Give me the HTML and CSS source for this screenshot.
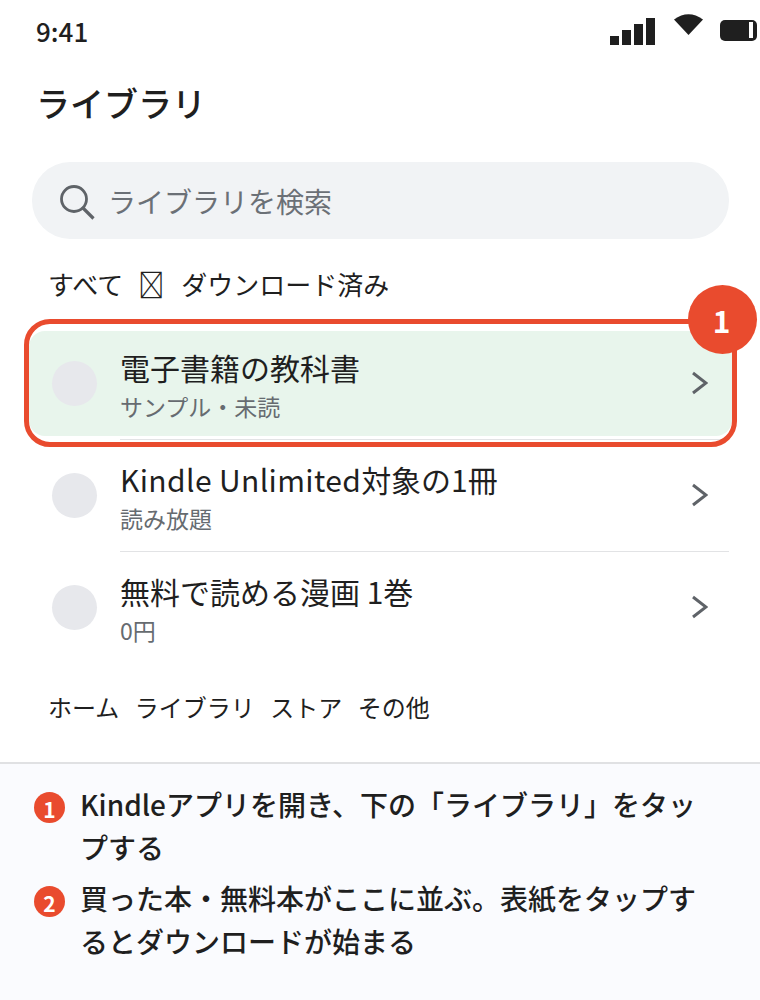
FILE: index.html
```html
<!DOCTYPE html>
<html lang="ja">
<head>
<meta charset="utf-8">
<title>ライブラリ</title>
<link rel="stylesheet" href="styles.css">
</head>
<body>
<div class="phone">
  <div class="status">
    <span class="time">9:41</span>
    <svg class="status-icons" width="147" height="31" viewBox="0 0 147 31">
      <rect x="0" y="22" width="9" height="9" fill="#1f1f1f"/>
      <rect x="12" y="16" width="9" height="15" fill="#1f1f1f"/>
      <rect x="24" y="10" width="9" height="21" fill="#1f1f1f"/>
      <rect x="36" y="4" width="9" height="27" fill="#1f1f1f"/>
      <path d="M64 5.5Q78.5 -5 93 5.5L78.5 21Z" fill="#1f1f1f"/>
      <rect x="110" y="6" width="37" height="21" rx="5" fill="#1f1f1f"/>
      <rect x="139" y="8" width="4" height="16" fill="#fff"/>
    </svg>
  </div>
  <h1 class="title">ライブラリ</h1>
  <div class="search">
    <svg class="search-icon" width="37" height="37" viewBox="0 0 37 37">
      <circle cx="15" cy="15" r="12.5" fill="none" stroke="#5f6368" stroke-width="2.8"/>
      <path d="M24 24L34.5 34.5" stroke="#5f6368" stroke-width="3.2" fill="none"/>
    </svg>
    <span class="search-text">ライブラリを検索</span>
  </div>
  <div class="tabs">
    <span>すべて</span>
    <span class="tofu">&#xE000;</span>
    <span>ダウンロード済み</span>
  </div>
  <ul class="list">
    <li class="row row-hl">
      <span class="hl-bg"></span>
      <span class="thumb"></span>
      <div class="row-body">
        <div class="row-title">電子書籍の教科書</div>
        <div class="row-sub">サンプル・未読</div>
      </div>
      <svg class="chev" width="17" height="24" viewBox="0 0 17 24"><path d="M2 2L15 12L2 22" fill="none" stroke="#5f6368" stroke-width="3"/></svg>
      <span class="hl-frame"></span>
      <span class="hl-badge">1</span>
    </li>
    <li class="row">
      <span class="thumb"></span>
      <div class="row-body">
        <div class="row-title"><span class="latin">Kindle Unlimited</span>対象の1冊</div>
        <div class="row-sub">読み放題</div>
      </div>
      <svg class="chev" width="17" height="24" viewBox="0 0 17 24"><path d="M2 2L15 12L2 22" fill="none" stroke="#5f6368" stroke-width="3"/></svg>
    </li>
    <li class="row row-last">
      <span class="thumb"></span>
      <div class="row-body">
        <div class="row-title">無料で読める漫画 1巻</div>
        <div class="row-sub">0円</div>
      </div>
      <svg class="chev" width="17" height="24" viewBox="0 0 17 24"><path d="M2 2L15 12L2 22" fill="none" stroke="#5f6368" stroke-width="3"/></svg>
    </li>
  </ul>
  <nav class="nav">
    <span>ホーム</span><span>ライブラリ</span><span>ストア</span><span>その他</span>
  </nav>
  <div class="legend">
    <div class="legend-item"><span class="num">1</span><p>Kindleアプリを開き、下の「ライブラリ」をタップする</p></div>
    <div class="legend-item"><span class="num">2</span><p>買った本・無料本がここに並ぶ。表紙をタップするとダウンロードが始まる</p></div>
  </div>
</div>
</body>
</html>
```
FILE: styles.css
```css
* { box-sizing: border-box; }
html, body { margin: 0; padding: 0; background: #fff; }
body { font-family: "Noto Sans CJK JP", "Noto Sans", sans-serif; color: #1f1f1f; }
.phone { width: 760px; height: 1000px; display: flex; flex-direction: column; overflow: hidden; }
.status { height: 64px; padding: 13px 3px 0 36px; display: flex; justify-content: space-between; align-items: flex-start; }
.status-icons { display: block; margin-top: 1px; }
.time { font-size: 26px; line-height: 36px; font-weight: 500; }
.title { margin: 14px 0 0 36px; font-size: 34px; line-height: 50px; font-weight: 500; }
.search { margin: 34px 31px 0 32px; height: 77px; border-radius: 38px; background: #f1f3f5; display: flex; align-items: center; padding-left: 27px; gap: 12px; }
.search-icon { display: block; flex: none; margin-top: 4px; }
.search-text { font-size: 28px; color: #6b7076; }
.tabs { margin: 26px 0 0 48px; height: 38px; display: flex; align-items: center; gap: 15px; font-size: 26px; line-height: 38px; }
.tofu { margin-right: 2px; }
.list { list-style: none; margin: 25px 31px 0 32px; padding: 0; }
.row { position: relative; height: 112px; display: flex; align-items: center; padding-left: 20px; }
.row-body { flex: 1; margin-left: 23px; height: 112px; padding-top: 17px; border-bottom: 1px solid #e2e3e5; position: relative; }
.row-last .row-body { border-bottom: 0; }
.row-title { font-size: 30px; line-height: 44px; }
.latin { letter-spacing: 0.37px; }
.row-sub { font-size: 23px; line-height: 34px; color: #666b70; }
.thumb { width: 45px; height: 45px; margin-top: -1px; border-radius: 50%; background: #e7e8ec; flex: none; position: relative; }
.chev { position: absolute; right: 21px; top: 43px; }
.hl-bg { position: absolute; left: -3px; right: -3px; top: 3px; bottom: 4px; border-radius: 16px; background: #e8f5ec; }
.hl-frame { position: absolute; left: -8px; right: -8px; top: -9px; bottom: -7px; border: 5px solid #e94b2e; border-radius: 26px; }
.hl-badge { position: absolute; right: -28px; top: -43px; width: 69px; height: 69px; border-radius: 50%; padding-right: 2px; background: #e94b2e; color: #fff; font-size: 30px; font-weight: 700; display: flex; align-items: center; justify-content: center; }
.nav { margin: 25px 0 0 48px; display: flex; gap: 15.5px; font-size: 24px; line-height: 36px; }
.legend { margin-top: 37px; flex: 1; border-top: 2px solid #e0e1e3; background: #fafbfe; padding: 19px 60px 0 34px; }
.legend-item { display: flex; gap: 15px; margin-bottom: 8px; }
.legend-item p { margin: 0; font-size: 28px; line-height: 43px; font-weight: 500; }
.num { width: 31px; height: 31px; margin-top: 9px; padding-top: 2px; border-radius: 50%; background: #e94b2e; color: #fff; font-size: 21px; font-weight: 700; flex: none; display: flex; align-items: center; justify-content: center; }
```
